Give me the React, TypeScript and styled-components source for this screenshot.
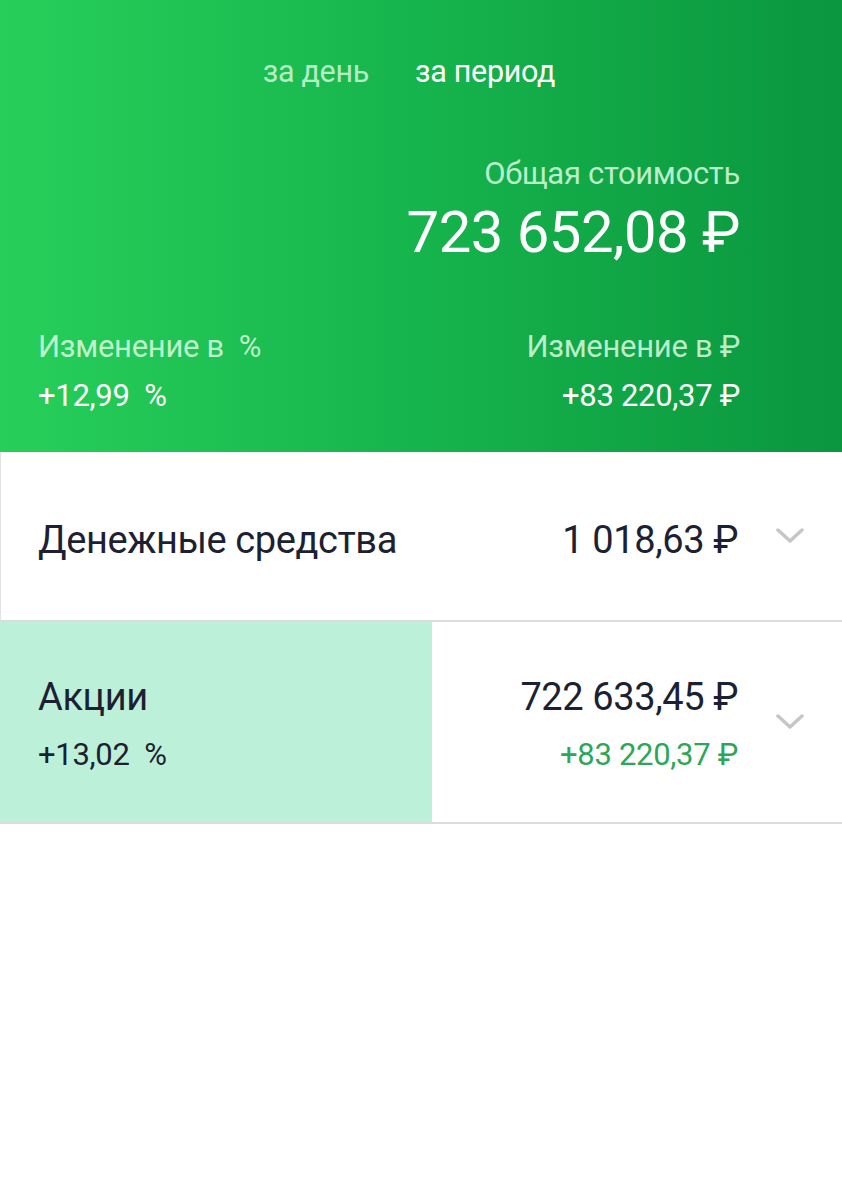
import * as React from "react";
import styled, { createGlobalStyle } from "styled-components";

const GlobalStyle = createGlobalStyle`
  html, body {
    margin: 0;
    padding: 0;
    background: #ffffff;
  }
  body {
    font-family: "Roboto", "Noto Sans", sans-serif;
    -webkit-font-smoothing: antialiased;
  }
`;

type Row = {
  title: string;
  value: string;
  percent?: string;
  change?: string;
};

const rows: Row[] = [
  { title: "Денежные средства", value: "1 018,63 ₽" },
  {
    title: "Акции",
    value: "722 633,45 ₽",
    percent: "+13,02  %",
    change: "+83 220,37 ₽",
  },
];

const Chevron: React.FC = () => (
  <svg width="28" height="16" viewBox="0 0 28 16" fill="none">
    <polyline
      points="2,2 14,13 26,2"
      stroke="#c6c6c6"
      strokeWidth="3.5"
      strokeLinecap="round"
      strokeLinejoin="round"
    />
  </svg>
);

const App: React.FC = () => {
  return (
    <>
      <GlobalStyle />
      <Page>
        <Header>
          <Tabs>
            <Tab>за день</Tab>
            <Tab $active>за период</Tab>
          </Tabs>
          <Total>
            <Label>Общая стоимость</Label>
            <BigValue>723 652,08 ₽</BigValue>
          </Total>
          <Changes>
            <ChangeCol>
              <Label>{"Изменение в  %"}</Label>
              <ChangeValue>{"+12,99  %"}</ChangeValue>
            </ChangeCol>
            <ChangeCol $right>
              <Label>Изменение в ₽</Label>
              <ChangeValue>+83 220,37 ₽</ChangeValue>
            </ChangeCol>
          </Changes>
        </Header>

        {rows.map((row) => (
          <AssetRow key={row.title} $tall={!!row.change}>
            <AssetLeft $highlight={!!row.change}>
              <AssetTitle>{row.title}</AssetTitle>
              {row.percent && <AssetSub>{row.percent}</AssetSub>}
            </AssetLeft>
            <AssetRight>
              <AssetTitle>{row.value}</AssetTitle>
              {row.change && <AssetSub $green>{row.change}</AssetSub>}
            </AssetRight>
            <ChevronCell>
              <Chevron />
            </ChevronCell>
          </AssetRow>
        ))}
      </Page>
    </>
  );
};

const Page = styled.div`
  width: 842px;
  min-height: 1200px;
  background: #ffffff;
`;

const Header = styled.div`
  height: 452px;
  box-sizing: border-box;
  padding: 54px 102px 0 38px;
  background: linear-gradient(90deg, #27cf5a 0%, #16b44c 50%, #0a963f 100%);
  display: flex;
  flex-direction: column;
`;

const Tabs = styled.div`
  display: flex;
  justify-content: center;
  gap: 46px;
  padding-left: 40px;
`;

const Tab = styled.div<{ $active?: boolean }>`
  font-size: 30.5px;
  line-height: 36px;
  letter-spacing: -0.3px;
  color: ${(p) => (p.$active ? "#ffffff" : "rgba(225, 250, 230, 0.8)")};
`;

const Total = styled.div`
  margin-top: 64px;
  display: flex;
  flex-direction: column;
  align-items: flex-end;
`;

const Label = styled.div`
  font-size: 31px;
  line-height: 40px;
  white-space: pre;
  color: rgba(220, 250, 226, 0.85);
  letter-spacing: -0.3px;
`;

const BigValue = styled.div`
  margin-top: 3px;
  font-size: 58px;
  line-height: 70px;
  color: #ffffff;
  letter-spacing: -0.5px;
`;

const Changes = styled.div`
  margin-top: 60px;
  display: flex;
  justify-content: space-between;
`;

const ChangeCol = styled.div<{ $right?: boolean }>`
  display: flex;
  flex-direction: column;
  gap: 9px;
  align-items: ${(p) => (p.$right ? "flex-end" : "flex-start")};
`;

const ChangeValue = styled.div`
  font-size: 31px;
  line-height: 40px;
  white-space: pre;
  color: #ffffff;
  letter-spacing: -0.3px;
`;

const AssetRow = styled.div<{ $tall?: boolean }>`
  display: flex;
  height: ${(p) => (p.$tall ? "200px" : "168px")};
  border-bottom: 2px solid #dcdcdc;
  border-left: ${(p) => (p.$tall ? "none" : "1px solid #e2e2e2")};
`;

const AssetLeft = styled.div<{ $highlight?: boolean }>`
  flex: 0 0 ${(p) => (p.$highlight ? "432px" : "auto")};
  box-sizing: border-box;
  padding: 8px 0 0 ${(p) => (p.$highlight ? "38px" : "37px")};
  display: flex;
  flex-direction: column;
  justify-content: center;
  gap: 8px;
  background: ${(p) => (p.$highlight ? "#bdf0d8" : "transparent")};
`;

const AssetRight = styled.div`
  flex: 1;
  padding-top: 8px;
  display: flex;
  flex-direction: column;
  justify-content: center;
  align-items: flex-end;
  gap: 8px;
`;

const AssetTitle = styled.div`
  font-size: 38px;
  line-height: 50px;
  color: #1d1f33;
  letter-spacing: -0.4px;
`;

const AssetSub = styled.div<{ $green?: boolean }>`
  font-size: 31px;
  line-height: 50px;
  white-space: pre;
  color: ${(p) => (p.$green ? "#2ea65a" : "#1d1f33")};
  letter-spacing: -0.3px;
`;

const ChevronCell = styled.div`
  flex: 0 0 104px;
  display: flex;
  align-items: center;
  justify-content: center;
`;

export default App;
